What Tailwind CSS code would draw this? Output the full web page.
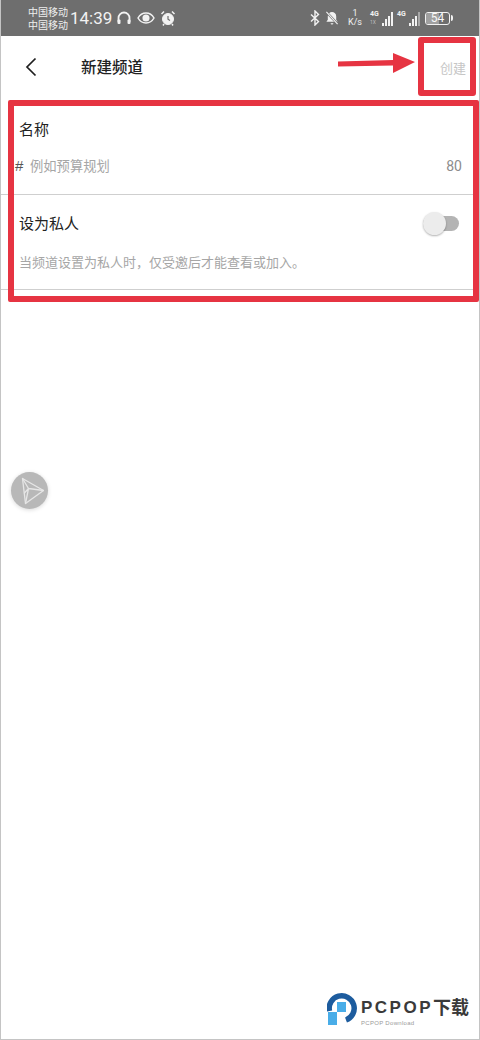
<!DOCTYPE html>
<html lang="zh">
<head>
<meta charset="utf-8">
<title>新建频道</title>
<script src="https://cdn.jsdelivr.net/npm/@tailwindcss/browser@4"></script>
</head>
<body class="bg-white">
<main class="relative w-[480px] h-[1040px] overflow-hidden bg-white border-x border-b border-[#c4c4c4] font-['Noto_Sans_CJK_SC','Noto_Sans',sans-serif]">

    <!-- status bar -->
    <div class="flex items-center h-9 -mx-px bg-[#6e6e6e] text-white">
        <div class="ml-[28px] -mt-px w-[41px] text-[10px] leading-[13px] text-[#eeeeee] whitespace-nowrap">
            <div>中国移动</div>
            <div>中国移动</div>
        </div>
        <span class="ml-[1px] text-[17px] leading-none font-['Roboto',sans-serif] text-[#f2f2f2]">14:39</span>
        <svg class="ml-[4px]" width="16" height="16" viewBox="0 0 16 16" fill="none" stroke="#f2f2f2" stroke-width="1.8"><path d="M2.5 12V8a5.500 5.500 0 0 1 11 0v4"/><rect x="1.500" y="9.500" width="3" height="4.500" rx="1" fill="#f2f2f2" stroke="none"/><rect x="11.500" y="9.500" width="3" height="4.500" rx="1" fill="#f2f2f2" stroke="none"/></svg>
        <svg class="ml-[5px]" width="18" height="14" viewBox="0 0 18 14" fill="none" stroke="#f2f2f2" stroke-width="1.500"><path d="M1 7c2-3.500 5-5 8-5s6 1.500 8 5c-2 3.500-5 5-8 5s-6-1.500-8-5z"/><circle cx="9" cy="7" r="2.800" fill="#f2f2f2"/></svg>
        <svg class="ml-[5px]" width="16" height="16" viewBox="0 0 16 16" fill="none" stroke="#f2f2f2"><circle cx="8" cy="9" r="5.500" fill="#f2f2f2"/><path d="M8 6v3.200l2 1.300" stroke="#6e6e6e" stroke-width="1.200"/><path d="M1.500 4L4 1.500M14.500 4L12 1.500M4 14l-1 1.500M12 14l1 1.500" stroke-width="1.500"/></svg>

        <div class="flex items-center ml-auto mr-[27px]">
            <svg width="10" height="16" viewBox="0 0 10 16" fill="none" stroke="#f2f2f2" stroke-width="1.400"><path d="M1 4.500l7.500 7L5 15V1l3.500 3.500L1 11.500"/></svg>
            <svg class="ml-[5px]" width="14" height="16" viewBox="0 0 15 16"><path d="M7.500 1.500a4.500 4.500 0 0 1 4.500 4.500v4l1.500 2H1.500L3 10V6a4.500 4.500 0 0 1 4.500-4.500zM6 13.500h3a1.500 1.500 0 0 1-3 0z" fill="#f2f2f2"/><path d="M1.500 1.500l12 13" stroke="#6e6e6e" stroke-width="2.500"/><path d="M1.500 1.500l12 13" stroke="#f2f2f2" stroke-width="1.200"/></svg>
            <div class="ml-[8px] w-[16px] text-center text-[9px] leading-[9px] text-[#f2f2f2] font-['Roboto',sans-serif] whitespace-nowrap">
                <div>1</div>
                <div>K/s</div>
            </div>
            <div class="relative ml-[7px] w-[23px] h-[16px]">
                <span class="absolute left-0 top-0 text-[7px] leading-[8px] font-bold text-[#f2f2f2] font-['Roboto',sans-serif]">4G</span>
                <span class="absolute left-0 top-[9px] text-[5px] leading-[6px] text-[#bcbcbc] font-['Roboto',sans-serif]">1X</span>
                <div class="absolute right-0 bottom-0 flex items-end gap-px">
                    <i class="block w-[2px] h-[3px] bg-[#f2f2f2]"></i>
                    <i class="block w-[2px] h-[7px] bg-[#f2f2f2]"></i>
                    <i class="block w-[2px] h-[10px] bg-[#f2f2f2]"></i>
                    <i class="block w-[2px] h-[14px] bg-[#f2f2f2]"></i>
                </div>
            </div>
            <div class="relative ml-[4px] w-[23px] h-[16px]">
                <span class="absolute left-0 top-0 text-[7px] leading-[8px] font-bold text-[#f2f2f2] font-['Roboto',sans-serif]">4G</span>
                <div class="absolute right-0 bottom-0 flex items-end gap-px">
                    <i class="block w-[2px] h-[3px] bg-[#f2f2f2]"></i>
                    <i class="block w-[2px] h-[7px] bg-[#f2f2f2]"></i>
                    <i class="block w-[2px] h-[10px] bg-[#f2f2f2]"></i>
                    <i class="block w-[2px] h-[14px] bg-[#a8a8a8]"></i>
                </div>
            </div>
            <div class="ml-[5px] flex items-center">
                <div class="relative w-[25px] h-[13px] rounded-[3px] border border-[#f2f2f2] overflow-hidden">
                    <div class="absolute left-0 top-0 bottom-0 w-[13px] bg-[#a0a0a0]"></div>
                    <span class="absolute inset-0 text-center text-[12px] leading-[11px] font-['Roboto',sans-serif] text-[#f7f7f7]">54</span>
                </div>
                <i class="block ml-[1px] w-[2px] h-[6px] rounded-r-sm bg-[#f2f2f2]"></i>
            </div>
        </div>
    </div>

    <!-- header -->
    <header class="flex items-center h-[61px] pl-[24px] pr-[13px]">
        <svg width="12" height="20" viewBox="0 0 12 20" fill="none" stroke="#1f1f1f" stroke-width="1.700"><path d="M10.500 1.500L2 10l8.500 8.500"/></svg>
        <h1 class="ml-[44px] text-[15.500px] font-medium leading-none text-[#222222]">新建频道</h1>
        <span class="ml-auto mt-[2px] text-[13px] leading-none text-[#c6c6c6]">创建</span>
    </header>

    <!-- form -->
    <section class="pt-[22px]">
        <div class="h-[76px] border-b border-[#cfcfcf] pr-[17px]">
            <div class="pl-[18px] text-[15px] leading-[20px] text-[#222222]">名称</div>
            <div class="flex items-center mt-[17px] pl-[14px]">
                <span class="w-[15px] text-[15px] leading-[20px] text-[#555555] font-['Liberation_Sans',sans-serif]">#</span>
                <span class="text-[13.300px] leading-[20px] text-[#a6a6a6]">例如预算规划</span>
                <span class="ml-auto text-[14px] leading-[20px] text-[#8c8c8c] font-['Roboto',sans-serif]">80</span>
            </div>
        </div>
        <div class="h-[95px] border-b border-[#cfcfcf] pt-[18px] pr-[20px]">
            <div class="flex items-center h-[20px] pl-[18px]">
                <span class="text-[15px] leading-[20px] text-[#222222]">设为私人</span>
                <div class="relative ml-auto w-[36px] h-[15px] rounded-full bg-[#b4b4b4]">
                    <div class="absolute left-0 top-[-4px] w-[23px] h-[23px] rounded-full bg-[#ececec] shadow-[0_1px_2px_rgba(0,0,0,0.3)]"></div>
                </div>
            </div>
            <p class="mt-[19px] pl-[18px] text-[13px] leading-[20px] text-[#a6a6a6] whitespace-nowrap">当频道设置为私人时，仅受邀后才能查看或加入。</p>
        </div>
    </section>

    <!-- floating button -->
    <div class="absolute left-[10px] top-[472px] flex items-center justify-center w-[37px] h-[37px] rounded-full bg-[#b8b8b8] shadow-[0_1px_4px_rgba(0,0,0,0.15)]">
        <svg width="28" height="28" viewBox="0 0 28 28" fill="none" stroke="#e6e6e6" stroke-width="1.300" stroke-linejoin="round"><path d="M6.500 1.500L27.500 13.500 9.500 26.500z"/><path d="M6.500 1.500L12.500 11.500 9.500 26.500M12.500 11.500L27.500 13.500M8 16.500L12.500 11.500"/></svg>
    </div>

    <!-- annotations -->
    <div class="absolute left-[7px] top-[100px] w-[471px] h-[202px] rounded-[2px] border-[6px] border-[#e63442]"></div>
    <div class="absolute left-[417px] top-[37px] w-[58px] h-[59px] rounded-[3px] border-[6px] border-[#e63442]"></div>
    <svg class="absolute left-[336px] top-[52px]" width="79" height="22" viewBox="0 0 79 22"><path d="M1 9.500l55-1.500V1l22 9-22 11v-7.500L1 14.500z" fill="#e63442"/></svg>

    <!-- watermark -->
    <div class="absolute left-[326px] top-[991px] flex items-start">
        <svg width="32" height="37" viewBox="0 0 32 37" fill="none"><path d="M2.500 20A12.500 12.500 0 1 1 19 29" stroke="#1d5c9e" stroke-width="5.500"/><rect x="10" y="11" width="9" height="10" fill="#49ade8"/><rect x="1" y="21" width="9" height="13" fill="#49ade8"/></svg>
        <div class="ml-[2px] mt-[7px]">
            <div class="flex items-center h-[20px] text-[#3a3a3a] whitespace-nowrap font-bold font-['Liberation_Sans','Noto_Sans_CJK_SC',sans-serif]">
                <span class="w-[72px] text-[17px] leading-[20px] tracking-[2.500px]">PCPOP</span>
                <span class="text-[18px] leading-[20px]">下载</span>
            </div>
            <div class="mt-[1px] text-[6px] leading-[8px] tracking-[0.3px] text-[#9a9a9a] whitespace-nowrap font-['Liberation_Sans',sans-serif]">PCPOP Download</div>
        </div>
    </div>
</main>
</body>
</html>
